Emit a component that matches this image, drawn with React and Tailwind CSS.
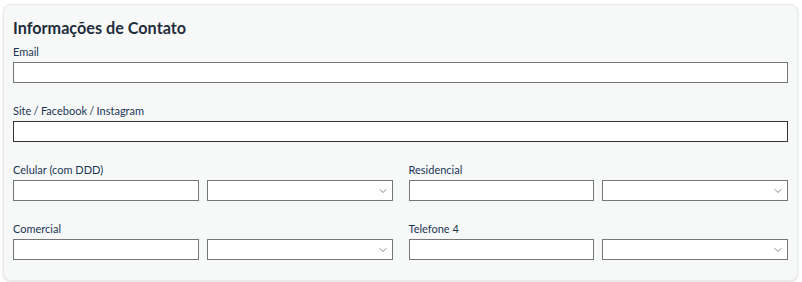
import { ChevronDown } from 'lucide-react';

const Label = ({ children, className = '' }) => (
  <label className={`block text-[11px] leading-[14px] text-[#1b3553] mb-[3px] ${className}`}>{children}</label>
);

const TextInput = ({ dark }) => (
  <input
    type="text"
    className={`block w-full h-[21px] bg-white border ${dark ? 'border-[#333333]' : 'border-[#767676]'} outline-none`}
  />
);

const SelectBox = () => (
  <div className="relative h-[21px] bg-white border border-[#767676]">
    <ChevronDown size={12} strokeWidth={1.4} className="absolute right-[3px] top-[4px] text-[#555]" />
  </div>
);

const PhoneField = ({ label }) => (
  <div>
    <Label>{label}</Label>
    <div className="grid grid-cols-2 gap-2">
      <TextInput />
      <SelectBox />
    </div>
  </div>
);

export default function App() {
  return (
    <div className="w-[802px] h-[282px] bg-white pt-[4px] pl-[3px] pr-[4px] pb-[1px]" style={{ fontFamily: 'Lato, "Open Sans", sans-serif' }}>
      <div className="h-full rounded-lg border border-[#e7eaeb] bg-[#f7f9f9] shadow-sm px-[9px] pt-[13px]">
        <h2 className="text-[16.2px] leading-[19px] font-bold text-[#1f2d3d] mb-[8px]">Informações de Contato</h2>

        <Label>Email</Label>
        <TextInput />

        <div className="mt-[21px]">
          <Label className="[word-spacing:-0.5px]">Site / Facebook / Instagram</Label>
          <TextInput dark />
        </div>

        <div className="mt-[21px] grid grid-cols-2 gap-x-4 gap-y-[21px]">
          <PhoneField label="Celular (com DDD)" />
          <PhoneField label="Residencial" />
          <PhoneField label="Comercial" />
          <PhoneField label="Telefone 4" />
        </div>
      </div>
    </div>
  );
}
